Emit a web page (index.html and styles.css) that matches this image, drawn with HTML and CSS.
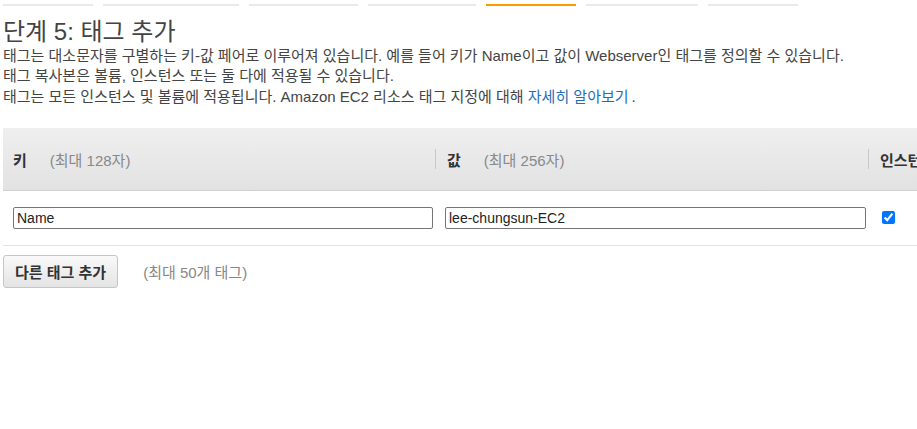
FILE: index.html
```html
<!DOCTYPE html>
<html lang="ko">
<head>
    <meta charset="UTF-8">
    <meta name="viewport" content="width=device-width, initial-scale=1.0">
    <title>단계 5: 태그 추가</title>
    <link rel="stylesheet" href="styles.css">
</head>

<body>
    <!-- Pasos del asistente (solo se ve la línea inferior) -->
    <ul class="pasos">
        <li class="paso p1"></li>
        <li class="paso p2"></li>
        <li class="paso p3"></li>
        <li class="paso p4"></li>
        <li class="paso p5 activo"></li>
        <li class="paso p6"></li>
        <li class="paso p7"></li>
    </ul>

    <h1 class="titulo">단계 5: 태그 추가</h1>

    <div class="descripcion">
        <p>태그는 대소문자를 구별하는 키-값 페어로 이루어져 있습니다. 예를 들어 키가 Name이고 값이 Webserver인 태그를 정의할 수 있습니다.</p>
        <p>태그 복사본은 볼륨, 인스턴스 또는 둘 다에 적용될 수 있습니다.</p>
        <p class="ultima">태그는 모든 인스턴스 및 볼륨에 적용됩니다. Amazon EC2 리소스 태그 지정에 대해 <a href="#" class="enlace">자세히 알아보기</a>.</p>
    </div>

    <div class="tabla">
        <div class="fila cabecera">
            <div class="col col-clave"><b>키</b><span class="limite">(최대 128자)</span></div>
            <div class="col col-valor separada"><b>값</b><span class="limite">(최대 256자)</span></div>
            <div class="col col-inst separada"><b>인스턴스</b></div>
        </div>
        <div class="fila datos">
            <div class="col col-clave"><input type="text" class="campo" value="Name"></div>
            <div class="col col-valor"><input type="text" class="campo" value="lee-chungsun-EC2"></div>
            <div class="col col-inst"><input type="checkbox" checked></div>
        </div>
    </div>

    <div class="acciones">
        <button class="boton">다른 태그 추가</button>
        <span class="limite-tags">(최대 50개 태그)</span>
    </div>
</body>
</html>
```

FILE: styles.css
```css
html, body {
    overflow: hidden;
}

body {
    margin: 0;
    padding: 0 0 0 3px;
    font-family: "Liberation Sans", "Noto Sans CJK KR", sans-serif;
    font-size: 15px;
    color: #444;
    background-color: #fff;
}

.pasos {
    display: flex;
    gap: 10px;
    list-style: none;
    margin: 4px 0 0 0;
    padding: 0;
}

.paso {
    height: 2px;
    background-color: #eaeaea;
}

.p1 { width: 90px; }
.p2 { width: 136px; }
.p3 { width: 109px; }
.p4 { width: 108px; }
.p5 { width: 90px; }
.p6 { width: 112px; }
.p7 { width: 90px; }

.paso.activo {
    background-color: #ff9900;
}

.titulo {
    margin: 12px 0 0 0;
    font-size: 24px;
    font-weight: normal;
    line-height: 28px;
    color: #444;
}

.descripcion p {
    margin: 0;
    line-height: 20px;
}

.descripcion .ultima {
    margin-top: 1px;
}

.enlace {
    color: #1f6fb8;
    text-decoration: none;
    margin-right: 3px;
}

.tabla {
    width: 1200px;
    margin-top: 21px;
}

.fila {
    display: flex;
}

.col {
    box-sizing: border-box;
    padding-left: 10px;
}

.col-clave { width: 432px; }
.col-valor { width: 433px; }
.col-inst { flex: 1; }

.cabecera {
    height: 62px;
    align-items: center;
    background: linear-gradient(#efefef, #e2e2e2);
    border-bottom: 1px solid #cfcfcf;
}

.cabecera .col {
    display: flex;
    align-items: center;
    height: 20px;
    color: #333;
}

.cabecera .separada {
    border-left: 1px solid #c8c8c8;
    padding-left: 11px;
}

.limite {
    margin-left: 23px;
    color: #888;
}

.datos {
    height: 54px;
    align-items: center;
    border-bottom: 1px solid #e2e2e2;
}

.datos .col-clave,
.datos .col-valor {
    padding-right: 2px;
}

.campo {
    box-sizing: border-box;
    width: 100%;
    height: 22px;
    margin: 0;
    padding: 0 3px;
    border: 1px solid #767676;
    border-radius: 2px;
    font-family: "Liberation Sans", "Noto Sans CJK KR", sans-serif;
    font-size: 14px;
    color: #222;
}

.datos input[type="checkbox"] {
    margin: 0 0 0 4px;
    width: 13px;
    height: 13px;
}

.acciones {
    display: flex;
    align-items: center;
    margin-top: 9px;
}

.boton {
    height: 33px;
    padding: 0 11px 0 11px;
    border: 1px solid #c6c6c6;
    border-radius: 3px;
    background: linear-gradient(#f9f9f9, #e4e4e4);
    font-family: "Liberation Sans", "Noto Sans CJK KR", sans-serif;
    font-size: 15px;
    font-weight: bold;
    color: #333;
    cursor: pointer;
}

.limite-tags {
    margin-left: 25px;
    color: #888;
}
```
